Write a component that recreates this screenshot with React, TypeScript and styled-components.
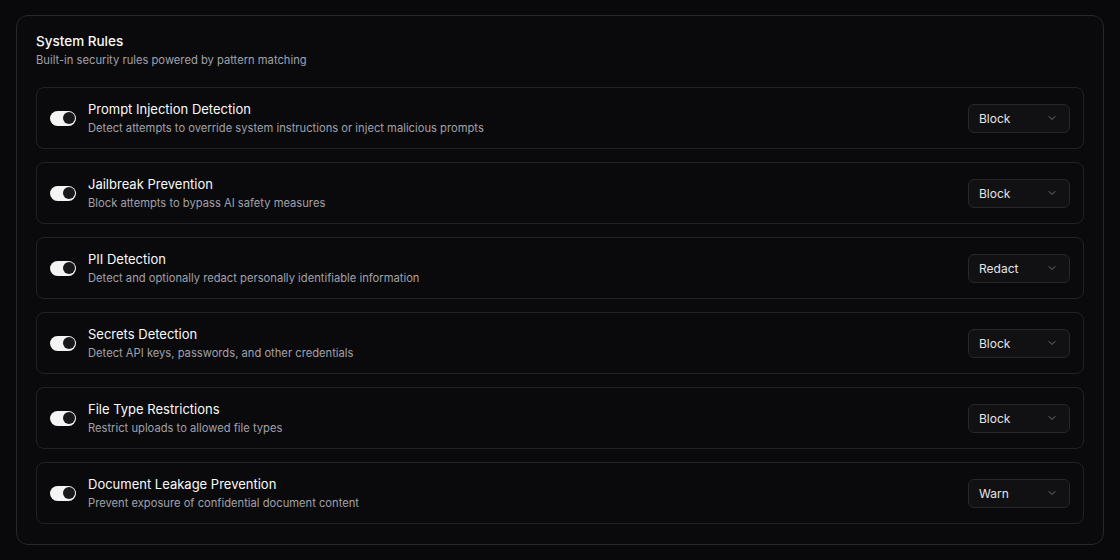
import React from "react";
import styled, { createGlobalStyle } from "styled-components";

const GlobalStyle = createGlobalStyle`
  html, body {
    margin: 0;
    padding: 0;
    background: #09090b;
    color: #fafafa;
    font-family: Inter, "Noto Sans", sans-serif;
    -webkit-font-smoothing: antialiased;
  }
`;

type Rule = {
  name: string;
  description: string;
  action: string;
};

const rules: Rule[] = [
  {
    name: "Prompt Injection Detection",
    description: "Detect attempts to override system instructions or inject malicious prompts",
    action: "Block",
  },
  {
    name: "Jailbreak Prevention",
    description: "Block attempts to bypass AI safety measures",
    action: "Block",
  },
  {
    name: "PII Detection",
    description: "Detect and optionally redact personally identifiable information",
    action: "Redact",
  },
  {
    name: "Secrets Detection",
    description: "Detect API keys, passwords, and other credentials",
    action: "Block",
  },
  {
    name: "File Type Restrictions",
    description: "Restrict uploads to allowed file types",
    action: "Block",
  },
  {
    name: "Document Leakage Prevention",
    description: "Prevent exposure of confidential document content",
    action: "Warn",
  },
];

const App: React.FC = () => {
  return (
    <>
      <GlobalStyle />
      <Page>
        <Card>
          <CardHeader>
            <CardTitle>System Rules</CardTitle>
            <CardSubtitle>Built-in security rules powered by pattern matching</CardSubtitle>
          </CardHeader>
          <RuleList>
            {rules.map((rule) => (
              <RuleRow key={rule.name}>
                <Toggle role="switch" aria-checked={true}>
                  <Thumb />
                </Toggle>
                <RuleText>
                  <RuleName>{rule.name}</RuleName>
                  <RuleDesc>{rule.description}</RuleDesc>
                </RuleText>
                <Select>
                  <span>{rule.action}</span>
                  <svg width="12" height="12" viewBox="0 0 24 24" fill="none" stroke="currentColor" strokeWidth="2" strokeLinecap="round" strokeLinejoin="round">
                    <path d="m6 9 6 6 6-6" />
                  </svg>
                </Select>
              </RuleRow>
            ))}
          </RuleList>
        </Card>
      </Page>
    </>
  );
};

export default App;

const Page = styled.div`
  width: 1120px;
  height: 560px;
  box-sizing: border-box;
  padding: 15px 16px;
`;

const Card = styled.div`
  box-sizing: border-box;
  height: 530px;
  border: 1px solid #27272a;
  border-radius: 12px;
  background: #0a0a0c;
  padding: 16px 19px 20px;
  display: flex;
  flex-direction: column;
`;

const CardHeader = styled.div`
  display: flex;
  flex-direction: column;
  gap: 2px;
  margin-bottom: 19px;
`;

const CardTitle = styled.div`
  font-size: 13.5px;
  font-weight: 500;
  line-height: 18px;
  color: #fafafa;
`;

const CardSubtitle = styled.div`
  font-size: 11.2px;
  line-height: 16px;
  color: #a1a1aa;
`;

const RuleList = styled.div`
  display: flex;
  flex-direction: column;
  gap: 13px;
`;

const RuleRow = styled.div`
  box-sizing: border-box;
  height: 62px;
  display: flex;
  align-items: center;
  padding: 0 13px;
  border: 1px solid #222226;
  border-radius: 8px;
  background: #0a0a0c;
`;

const Toggle = styled.div`
  box-sizing: border-box;
  width: 26px;
  height: 15px;
  border-radius: 999px;
  background: #f4f4f5;
  display: flex;
  align-items: center;
  justify-content: flex-end;
  padding: 1.5px;
  flex-shrink: 0;
`;

const Thumb = styled.div`
  box-sizing: border-box;
  width: 12px;
  height: 12px;
  border-radius: 50%;
  background: #18181b;
`;

const RuleText = styled.div`
  flex: 1;
  margin-left: 12px;
  display: flex;
  flex-direction: column;
  gap: 3px;
  padding-top: 1px;
`;

const RuleName = styled.div`
  font-size: 13px;
  font-weight: 400;
  line-height: 17px;
  color: #fafafa;
`;

const RuleDesc = styled.div`
  font-size: 11.2px;
  line-height: 15px;
  color: #a1a1aa;
`;

const Select = styled.div`
  box-sizing: border-box;
  width: 102px;
  height: 29px;
  border: 1px solid #27272a;
  border-radius: 6px;
  background: #111113;
  display: flex;
  align-items: center;
  justify-content: space-between;
  padding: 0 11px 0 10px;
  font-size: 12px;
  color: #e4e4e7;

  svg {
    color: #71717a;
  }
`;
